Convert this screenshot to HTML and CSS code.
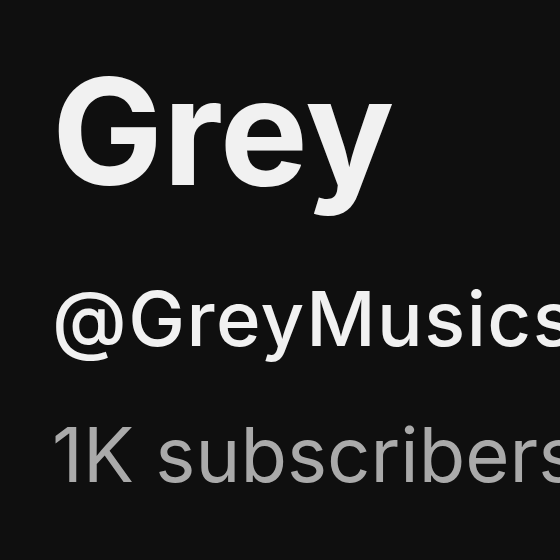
FILE: index.html
```html
<!doctype html>
<html>
<head>
<meta charset="utf-8">
<title>Grey</title>
<link rel="stylesheet" href="styles.css">
</head>
<body>
<div id="channel">
<h1 class="channel-name">Grey</h1>
<p class="channel-handle">@GreyMusics</p>
<p class="channel-subs">1K subscribers</p>
</div>
</body>
</html>
```

FILE: styles.css
```css
html, body {
	margin: 0;
	height: 100%;
	background-color: #0f0f0f;
	overflow: hidden;
}
#channel {
	padding: 52px 0 0 52px;
	font-family: Inter, "Noto Sans", sans-serif;
	white-space: nowrap;
}
.channel-name {
	margin: 0;
	font-size: 148px;
	font-weight: 700;
	line-height: 160px;
	color: #f1f1f1;
}
.channel-handle {
	margin: 66px 0 0 0;
	font-size: 76px;
	font-weight: 500;
	line-height: 80px;
	letter-spacing: 1.5px;
	color: #f1f1f1;
}
.channel-subs {
	margin: 56px 0 0 0;
	font-size: 76px;
	font-weight: 400;
	line-height: 80px;
	color: #aaaaaa;
}
```
